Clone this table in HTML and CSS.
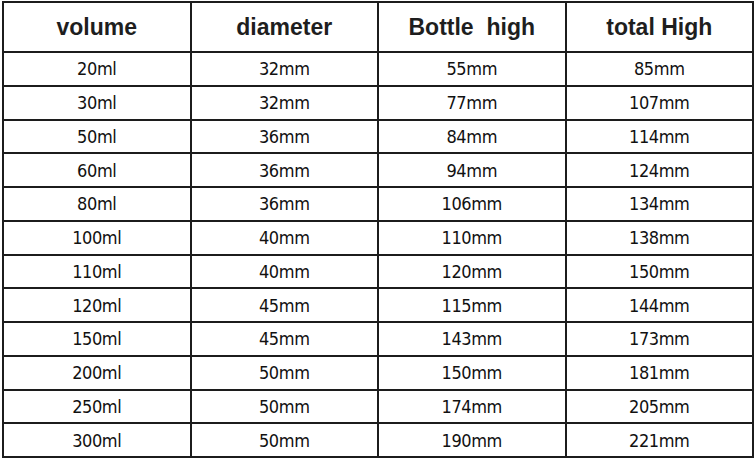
FILE: index.html
```html
<!DOCTYPE html>
<html>
<head>
<meta charset="utf-8">
<link rel="stylesheet" href="styles.css">
</head>
<body>
<table class="spec">
  <thead>
    <tr class="head-row"><th>volume</th><th>diameter</th><th>Bottle&nbsp; high</th><th>total High</th></tr>
  </thead>
  <tbody>
    <tr><td>20ml</td><td>32mm</td><td>55mm</td><td>85mm</td></tr>
    <tr><td>30ml</td><td>32mm</td><td>77mm</td><td>107mm</td></tr>
    <tr><td>50ml</td><td>36mm</td><td>84mm</td><td>114mm</td></tr>
    <tr><td>60ml</td><td>36mm</td><td>94mm</td><td>124mm</td></tr>
    <tr><td>80ml</td><td>36mm</td><td>106mm</td><td>134mm</td></tr>
    <tr><td>100ml</td><td>40mm</td><td>110mm</td><td>138mm</td></tr>
    <tr><td>110ml</td><td>40mm</td><td>120mm</td><td>150mm</td></tr>
    <tr><td>120ml</td><td>45mm</td><td>115mm</td><td>144mm</td></tr>
    <tr><td>150ml</td><td>45mm</td><td>143mm</td><td>173mm</td></tr>
    <tr><td>200ml</td><td>50mm</td><td>150mm</td><td>181mm</td></tr>
    <tr><td>250ml</td><td>50mm</td><td>174mm</td><td>205mm</td></tr>
    <tr><td>300ml</td><td>50mm</td><td>190mm</td><td>221mm</td></tr>
  </tbody>
</table>
</body>
</html>
```

FILE: styles.css
```css
html, body {
  margin: 0;
  padding: 0;
  background: #ffffff;
}

.spec {
  margin: 1px 0 0 2px;
  width: 752px;
  border-collapse: collapse;
  table-layout: fixed;
  color: #111111;
}

.spec th,
.spec td {
  border: 2px solid #1c1c1c;
  text-align: center;
  vertical-align: middle;
  padding: 0;
}

.spec th {
  height: 48px;
  font-family: "Liberation Sans", Arial, sans-serif;
  font-weight: bold;
  font-size: 23px;
  color: #1e1e1e;
}

.spec tbody tr {
  height: 33.75px;
}

.spec td {
  font-family: "DejaVu Sans Condensed", "DejaVu Sans", sans-serif;
  font-stretch: condensed;
  font-size: 18px;
  letter-spacing: -0.4px;
}
```
